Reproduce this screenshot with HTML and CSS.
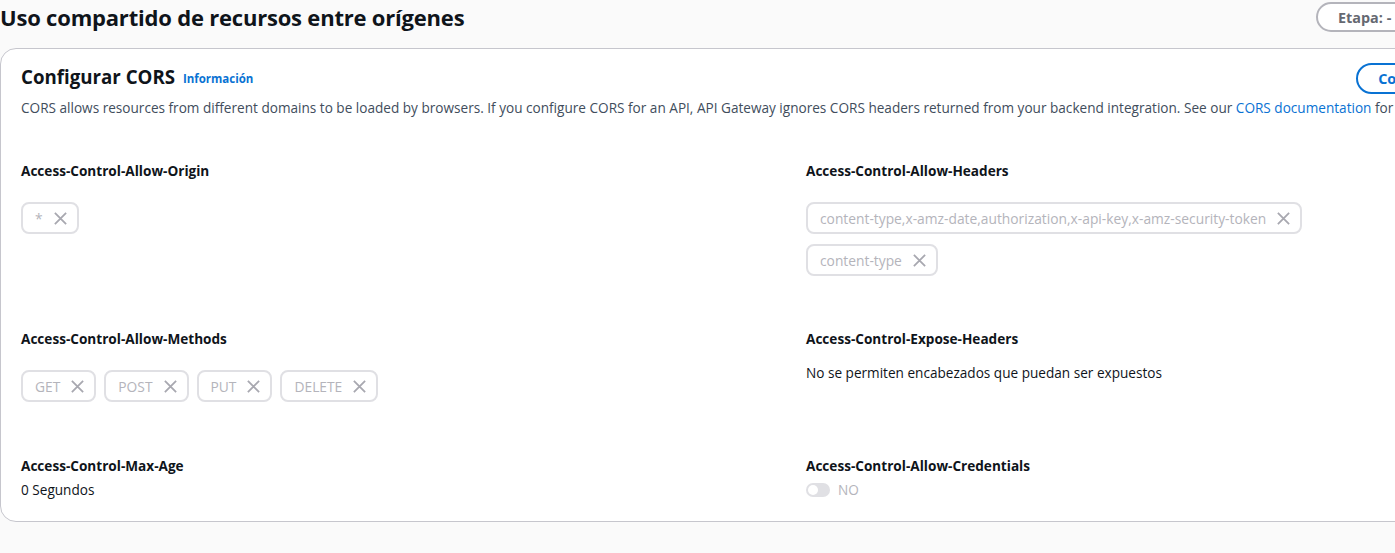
FILE: index.html
```html
<!DOCTYPE html>
<html lang="es">
<head>
<meta charset="utf-8">
<title>CORS</title>
<link rel="stylesheet" href="styles.css">
</head>
<body>
<div class="page">
  <div class="page-header">
    <h1 class="page-title">Uso compartido de recursos entre orígenes</h1>
    <button class="stage-btn">Etapa: -</button>
  </div>

  <section class="card">
    <div class="card-header">
      <div class="card-title-row">
        <h2 class="card-title">Configurar CORS <a class="info-link" href="#">Información</a></h2>
        <button class="primary-outline">Configurar</button>
      </div>
      <p class="card-desc">CORS allows resources from different domains to be loaded by browsers. If you configure CORS for an API, API Gateway ignores CORS headers returned from your backend integration. See our <a href="#" class="link">CORS documentation</a> for more information.</p>
    </div>

    <div class="fields">
      <div class="field">
        <div class="label">Access-Control-Allow-Origin</div>
        <div class="tokens">
          <span class="token">*<svg class="x" viewBox="0 0 16 16"><path d="M2 2l12 12M14 2L2 14"/></svg></span>
        </div>
      </div>
      <div class="field">
        <div class="label">Access-Control-Allow-Headers</div>
        <div class="tokens">
          <span class="token">content-type,x-amz-date,authorization,x-api-key,x-amz-security-token<svg class="x" viewBox="0 0 16 16"><path d="M2 2l12 12M14 2L2 14"/></svg></span>
          <span class="token">content-type<svg class="x" viewBox="0 0 16 16"><path d="M2 2l12 12M14 2L2 14"/></svg></span>
        </div>
      </div>

      <div class="field field-mid">
        <div class="label">Access-Control-Allow-Methods</div>
        <div class="tokens">
          <span class="token">GET<svg class="x" viewBox="0 0 16 16"><path d="M2 2l12 12M14 2L2 14"/></svg></span>
          <span class="token">POST<svg class="x" viewBox="0 0 16 16"><path d="M2 2l12 12M14 2L2 14"/></svg></span>
          <span class="token">PUT<svg class="x" viewBox="0 0 16 16"><path d="M2 2l12 12M14 2L2 14"/></svg></span>
          <span class="token">DELETE<svg class="x" viewBox="0 0 16 16"><path d="M2 2l12 12M14 2L2 14"/></svg></span>
        </div>
      </div>
      <div class="field field-mid">
        <div class="label">Access-Control-Expose-Headers</div>
        <div class="value value-gap">No se permiten encabezados que puedan ser expuestos</div>
      </div>

      <div class="field">
        <div class="label">Access-Control-Max-Age</div>
        <div class="value">0 Segundos</div>
      </div>
      <div class="field">
        <div class="label">Access-Control-Allow-Credentials</div>
        <div class="value toggle-row"><span class="toggle"><span class="knob"></span></span><span class="toggle-text">NO</span></div>
      </div>
    </div>
  </section>
  <div class="page-bottom"></div>
</div>
</body>
</html>
```

FILE: styles.css
```css
html, body {
  margin: 0;
  padding: 0;
  background: #fafafa;
  overflow: hidden;
}
body {
  font-family: "Open Sans", "Noto Sans", sans-serif;
  color: #0f141a;
}
.page {
  width: 1500px;
}
.page-header {
  display: flex;
  align-items: center;
  justify-content: space-between;
  height: 34px;
  padding-right: 74px;
  margin-bottom: 14px;
}
.page-title {
  margin: 0;
  font-size: 22px;
  line-height: 30px;
  font-weight: 700;
  letter-spacing: -0.2px;
}
.stage-btn {
  font-family: inherit;
  font-size: 14.4px;
  font-weight: 700;
  color: #656871;
  background: #fff;
  border: 2px solid #b4b4bb;
  border-radius: 20px;
  height: 30px;
  padding: 0 20px;
  width: 110px;
  text-align: left;
  white-space: nowrap;
}
.card {
  background: #fff;
  border: 1px solid #c6c6cd;
  border-radius: 16px;
  padding: 13px 20px 21px;
}
.card-title-row {
  display: flex;
  align-items: center;
  justify-content: space-between;
  padding-right: 2px;
}
.card-title {
  margin: 0;
  font-size: 18.7px;
  line-height: 30px;
  font-weight: 700;
}
.info-link {
  font-size: 11.5px;
  font-weight: 700;
  color: #0972d3;
  text-decoration: none;
  margin-left: 3px;
  vertical-align: 1px;
}
.primary-outline {
  font-family: inherit;
  font-size: 14.4px;
  font-weight: 700;
  color: #0972d3;
  background: #fff;
  border: 2px solid #0972d3;
  border-radius: 20px;
  height: 31px;
  padding: 0 20px;
}
.card-desc {
  margin: 4px 0 0;
  font-size: 13.6px;
  line-height: 20px;
  color: #414d5c;
  white-space: nowrap;
}
.link {
  color: #0972d3;
  text-decoration: none;
}
.fields {
  display: grid;
  grid-template-columns: 785px 620px;
  row-gap: 52px;
  margin-top: 43px;
}
.field-mid {
  padding-bottom: 1px;
}
.label {
  font-size: 13.6px;
  line-height: 20px;
  font-weight: 700;
}
.tokens {
  display: flex;
  flex-wrap: wrap;
  gap: 10px 8px;
  margin: 21px 0 1px;
}
.token {
  display: inline-flex;
  align-items: center;
  height: 32px;
  box-sizing: border-box;
  border: 2px solid #e0e0e4;
  border-radius: 8px;
  padding: 0 9px 0 12px;
  font-size: 13.8px;
  color: #b4b4bb;
}
.x {
  width: 15px;
  height: 15px;
  margin-left: 10px;
  fill: none;
  stroke: #a8a8b0;
  stroke-width: 1.9;
}
.value {
  font-size: 13.6px;
  line-height: 20px;
  margin-top: 4px;
}
.value-gap {
  margin-top: 14px;
}
.toggle-row {
  display: flex;
  align-items: center;
  gap: 8px;
}
.toggle {
  display: inline-block;
  width: 24px;
  height: 14px;
  border-radius: 7px;
  background: #e0e0e4;
  position: relative;
}
.knob {
  position: absolute;
  left: 2px;
  top: 2px;
  width: 10px;
  height: 10px;
  border-radius: 50%;
  background: #fff;
}
.toggle-text {
  color: #b4b4bb;
}
```
